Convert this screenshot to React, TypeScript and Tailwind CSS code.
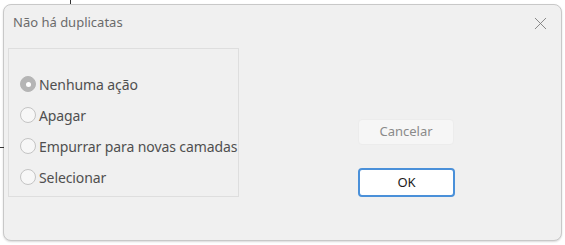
import { X } from 'lucide-react';

const options = ['Nenhuma ação', 'Apagar', 'Empurrar para novas camadas', 'Selecionar'];

function Radio({ checked }: { checked: boolean }) {
  return (
    <span
      className={
        'flex h-[16px] w-[16px] shrink-0 items-center justify-center rounded-full border ' +
        (checked ? 'border-[#b5b5b5] bg-[#b5b5b5]' : 'border-[#c4c4c4] bg-[#f7f7f7]')
      }
    >
      {checked && <span className="h-[5px] w-[5px] rounded-full bg-white" />}
    </span>
  );
}

export default function App() {
  return (
    <div className="relative h-[245px] w-[565px] overflow-hidden bg-white pl-[3px] pt-[4px] font-['Noto_Sans',sans-serif]">
      {/* bits of the window behind */}
      <div className="absolute left-[70px] top-0 h-[4px] w-[1px] bg-[#333]" />
      <div className="absolute left-0 top-[147px] h-[1px] w-[4px] bg-[#333]" />

      <div className="flex h-[237px] w-[559px] flex-col rounded-[8px] border border-[#c8c8c8] bg-[#f0f0f0] shadow-[0_1px_2px_rgba(0,0,0,0.15)]">
        <div className="flex h-[36px] items-center justify-between pl-[9px] pr-[10px]">
          <span className="text-[13px] text-[#6b6b6b]">Não há duplicatas</span>
          <X size={21} strokeWidth={1} className="text-[#7a7a7a]" />
        </div>

        <div className="flex pl-[4px] pt-[7px]">
          <div className="flex h-[149px] w-[231px] flex-col gap-[13px] border border-[#dedede] pl-[11px] pt-[26px]">
            {options.map((o, i) => (
              <label key={o} className="flex h-[18px] items-center gap-[3px] text-[14px] text-[#4f4f4f]">
                <Radio checked={i === 0} />
                <span className="whitespace-nowrap tracking-[-0.1px]">{o}</span>
              </label>
            ))}
          </div>

          <div className="ml-[119px] flex flex-col gap-[23px] pt-[71px]">
            <button className="h-[26px] w-[96px] rounded-[4px] border border-[#ececec] bg-[#f6f6f6] text-[13px] text-[#8a8a8a]">
              Cancelar
            </button>
            <button className="h-[29px] w-[97px] rounded-[4px] border-2 border-[#4a90d9] bg-white text-[13px] text-[#1a1a1a]">
              OK
            </button>
          </div>
        </div>
      </div>
    </div>
  );
}
